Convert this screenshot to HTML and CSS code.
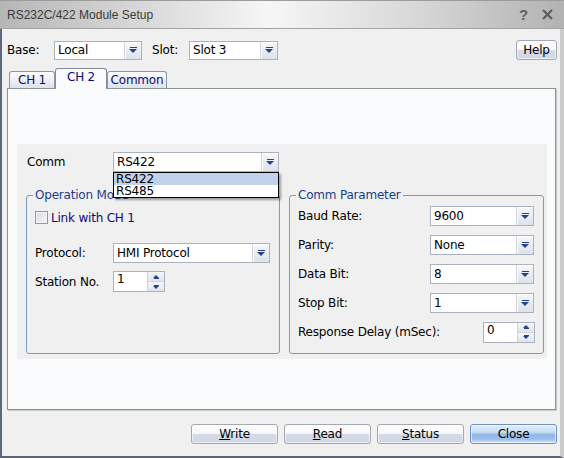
FILE: index.html
```html
<!DOCTYPE html>
<html>
<head>
<meta charset="utf-8">
<link rel="stylesheet" href="styles.css">
</head>
<body>
<div class="window">
  <div class="titlebar">
    <span class="title">RS232C/422 Module Setup</span>
    <span class="tb-btns">
      <span class="tb-q">?</span>
      <svg class="tb-x" width="11" height="11" viewBox="0 0 11 11"><path d="M1 1L10 10M10 1L1 10" stroke="#5e5e5e" stroke-width="2.2"/></svg>
    </span>
  </div>
  <div class="frame">
    <div class="toolbar">
      <span class="lbl lbl-base">Base:</span>
      <div class="combo w-base"><span class="val">Local</span><span class="dd"></span></div>
      <span class="lbl lbl-slot">Slot:</span>
      <div class="combo w-slot"><span class="val">Slot 3</span><span class="dd"></span></div>
      <button class="btn help">Help</button>
    </div>
    <div class="tabs">
      <div class="tab t1">CH 1</div>
      <div class="tab t2 sel">CH 2</div>
      <div class="tab t3">Common</div>
    </div>
    <div class="panel">
      <div class="content">
        <div class="comm-row">
          <span class="lbl lbl-comm">Comm</span>
          <div class="combo-wrap">
            <div class="combo w-comm"><span class="val">RS422</span><span class="dd"></span></div>
            <div class="dropdown">
              <div class="opt sel">RS422</div>
              <div class="opt">RS485</div>
            </div>
          </div>
        </div>
        <div class="groups">
          <fieldset class="group g1">
            <legend>Operation Mode</legend>
            <div class="g-body g1-body">
              <div class="chk-row"><span class="chk"></span><span class="chk-text">Link with CH 1</span></div>
              <div class="row row-proto">
                <span class="lbl lbl-g1">Protocol:</span>
                <div class="combo w-proto"><span class="val">HMI Protocol</span><span class="dd"></span></div>
              </div>
              <div class="row row-station">
                <span class="lbl lbl-g1">Station No.</span>
                <div class="spin w-spin"><span class="val">1</span><span class="arrows"><span class="up"></span><span class="down"></span></span></div>
              </div>
            </div>
          </fieldset>
          <fieldset class="group g2">
            <legend>Comm Parameter</legend>
            <div class="g-body g2-body">
              <div class="prow">
                <span class="lbl">Baud Rate:</span>
                <div class="combo w-param"><span class="val">9600</span><span class="dd"></span></div>
              </div>
              <div class="prow">
                <span class="lbl">Parity:</span>
                <div class="combo w-param"><span class="val">None</span><span class="dd"></span></div>
              </div>
              <div class="prow">
                <span class="lbl">Data Bit:</span>
                <div class="combo w-param"><span class="val">8</span><span class="dd"></span></div>
              </div>
              <div class="prow">
                <span class="lbl">Stop Bit:</span>
                <div class="combo w-param"><span class="val">1</span><span class="dd"></span></div>
              </div>
              <div class="prow">
                <span class="lbl">Response Delay (mSec):</span>
                <div class="spin w-spin spin-right"><span class="val">0</span><span class="arrows"><span class="up"></span><span class="down"></span></span></div>
              </div>
            </div>
          </fieldset>
        </div>
      </div>
    </div>
    <div class="footer">
      <button class="btn fbtn"><u>W</u>rite</button>
      <button class="btn fbtn"><u>R</u>ead</button>
      <button class="btn fbtn"><u>S</u>tatus</button>
      <button class="btn fbtn close">Close</button>
    </div>
  </div>
</div>
</body>
</html>
```

FILE: styles.css
```css
body {
  margin: 0;
  font-family: "DejaVu Sans", sans-serif;
  font-size: 12px;
  letter-spacing: -0.2px;
  color: #000;
}

.window {
  width: 564px;
  height: 458px;
  background: #f0f0f0;
  display: flex;
  flex-direction: column;
}

.titlebar {
  height: 29px;
  box-sizing: border-box;
  border-top: 1px solid #9c9c9c;
  border-bottom: 1px solid #a4a4a4;
  background: linear-gradient(to right, #b6b6b6 0%, #d4d4d4 22%, #f6f6f6 48%, #d6d6d6 75%, #b2b2b2 100%);
  display: flex;
  align-items: center;
  padding-left: 7px;
}

.title {
  font-family: "Liberation Sans", Arial, sans-serif;
  font-size: 12px;
  letter-spacing: 0;
  color: #3a3a3a;
}

.tb-btns {
  margin-left: auto;
  display: flex;
  align-items: center;
  gap: 14px;
  padding-right: 11px;
}

.tb-q {
  font-family: "Liberation Sans", Arial, sans-serif;
  font-weight: bold;
  font-size: 15px;
  color: #626262;
}

.frame {
  flex: 1;
  border-left: 2px solid #5b687b;
  border-right: 4px solid #cbcbcb;
  border-bottom: 2px solid #5e6570;
  padding: 11px 3px 0 5px;
  display: flex;
  flex-direction: column;
}

.toolbar {
  display: flex;
  align-items: center;
  height: 20px;
}

.lbl-base { width: 47px; }
.lbl-slot { width: 37px; margin-left: 10px; }

.combo {
  display: flex;
  box-sizing: border-box;
  height: 19px;
  border: 1px solid #aab2be;
  background: #fff;
}

.combo .val {
  flex: 1;
  padding-left: 3px;
  line-height: 17px;
  white-space: nowrap;
  overflow: hidden;
}

.dd {
  width: 16px;
  border-left: 1px solid #cfd4dc;
  background: linear-gradient(#f6f7f9, #dce2ea);
  box-shadow: inset 1px 1px 0 #fff;
  display: flex;
  flex-direction: column;
  align-items: center;
  justify-content: center;
}

.dd::before {
  content: "";
  width: 7px;
  height: 1px;
  background: #23438a;
  margin-bottom: 1px;
}

.dd::after {
  content: "";
  width: 0;
  height: 0;
  border-left: 4px solid transparent;
  border-right: 4px solid transparent;
  border-top: 4px solid #23438a;
}

.w-base { width: 88px; }
.w-slot { width: 89px; }
.w-comm { width: 166px; height: 20px; }
.w-comm .val { line-height: 18px; }
.w-proto { width: 157px; height: 20px; }
.w-proto .val { line-height: 18px; }
.w-param { width: 104px; height: 20px; }
.w-param .val { line-height: 18px; }

.btn {
  box-sizing: border-box;
  height: 20px;
  padding: 0;
  border: 1px solid #a3a8b0;
  border-radius: 3px;
  background: linear-gradient(#fdfdfd 0%, #f5f6f8 50%, #d5dbe6 50%, #d1d8e4 100%);
  box-shadow: inset 0 0 0 1px rgba(255,255,255,0.6);
  font-family: "DejaVu Sans", sans-serif;
  font-size: 12px;
  letter-spacing: -0.2px;
  color: #000;
  line-height: 17px;
}

.help {
  width: 41px;
  margin-left: auto;
}

.tabs {
  display: flex;
  align-items: flex-end;
  height: 20px;
  margin-top: 8px;
  padding-left: 2px;
}

.tab {
  box-sizing: border-box;
  height: 17px;
  border: 1px solid #8d97a3;
  border-bottom: none;
  border-radius: 3px 3px 0 0;
  background: linear-gradient(#fdfdfe, #dde2ee);
  color: #0a0a7a;
  text-align: center;
  line-height: 16px;
}

.t1 { width: 46px; }
.t2 { width: 52px; }
.t3 { width: 60px; }

.tab.sel {
  height: 21px;
  margin-bottom: -1px;
  background: #fafbfd;
  position: relative;
  z-index: 1;
  border-color: #7f8ea0;
}

.panel {
  width: 549px;
  height: 322px;
  box-sizing: border-box;
  border: 1px solid #8a9693;
  box-shadow: 1px 1px 0 #c6cbc9;
  background: #fafbfd;
  display: flex;
  flex-direction: column;
}

.content {
  margin: 55px 8px 0 9px;
  height: 215px;
  background: #f0f0f0;
  display: flex;
  flex-direction: column;
}

.comm-row {
  display: flex;
  align-items: center;
  padding: 8px 0 0 10px;
  height: 20px;
}

.lbl-comm { width: 86px; }

.combo-wrap {
  position: relative;
  width: 166px;
}

.dropdown {
  position: absolute;
  top: 20px;
  left: 0;
  width: 166px;
  box-sizing: border-box;
  border: 1px solid #000;
  background: #fff;
  box-shadow: 2px 2px 2px rgba(0,0,0,0.35);
  z-index: 5;
}

.opt {
  height: 12px;
  line-height: 12px;
  padding-left: 2px;
}

.opt.sel { background: #c1d1ec; }

.groups {
  display: flex;
  gap: 9px;
  margin-top: 16px;
  padding-left: 9px;
}

.group {
  margin: 0;
  padding: 0;
  border: 1px solid #7d9bb9;
  border-radius: 3px;
  height: 166px;
  box-sizing: border-box;
  min-width: 0;
}

.g1 { width: 254px; }
.g2 { width: 255px; }

.group legend {
  margin-left: 6px;
  padding: 0 2px;
  color: #173d8c;
  line-height: 14px;
  font-size: 12px;
}

.g1-body { padding: 9px 8px 0 8px; }

.chk-row {
  display: flex;
  align-items: center;
  height: 13px;
}

.chk {
  width: 13px;
  height: 13px;
  box-sizing: border-box;
  border: 1px solid #8e99a8;
  background: linear-gradient(135deg, #d8dbe0, #f7f7f8);
  box-shadow: inset 0 0 0 1px #f4f5f7;
  margin-right: 3px;
}

.chk-text { color: #0a0a7a; }

.row {
  display: flex;
  align-items: center;
}

.row-proto { margin-top: 19px; height: 20px; }
.row-station { margin-top: 8px; height: 21px; }

.lbl-g1 { width: 78px; }

.spin {
  display: flex;
  box-sizing: border-box;
  height: 21px;
  border: 1px solid #aab2be;
  background: #fff;
}

.w-spin { width: 52px; }

.spin .val {
  flex: 1;
  padding-left: 3px;
  line-height: 15px;
}

.arrows {
  width: 17px;
  display: flex;
  flex-direction: column;
}

.up, .down {
  flex: 1;
  border-left: 1px solid #cfd4dc;
  background: linear-gradient(#f6f7f9, #dfe4eb);
  display: flex;
  flex-direction: column;
  align-items: center;
  justify-content: center;
}

.down { border-top: 1px solid #cfd4dc; }

.up::before {
  content: "";
  width: 0;
  height: 0;
  border-left: 3px solid transparent;
  border-right: 3px solid transparent;
  border-bottom: 3px solid #23438a;
}

.up::after {
  content: "";
  width: 5px;
  height: 1px;
  background: #23438a;
}

.down::before {
  content: "";
  width: 5px;
  height: 1px;
  background: #23438a;
}

.down::after {
  content: "";
  width: 0;
  height: 0;
  border-left: 3px solid transparent;
  border-right: 3px solid transparent;
  border-top: 3px solid #23438a;
}

.g2-body {
  padding: 4px 9px 0 8px;
  display: flex;
  flex-direction: column;
  gap: 9px;
}

.prow {
  display: flex;
  align-items: center;
  justify-content: space-between;
  height: 20px;
}

.spin-right { margin-right: -1px; }

.footer {
  display: flex;
  justify-content: flex-end;
  gap: 6px;
  margin-top: 14px;
}

.fbtn { width: 87px; }

.close {
  border-color: #6f8fbf;
  background: linear-gradient(#e3eefb 0%, #c9ddf5 40%, #8fb5e7 55%, #9fc2ee 80%, #d3e5f9 100%);
}
```
